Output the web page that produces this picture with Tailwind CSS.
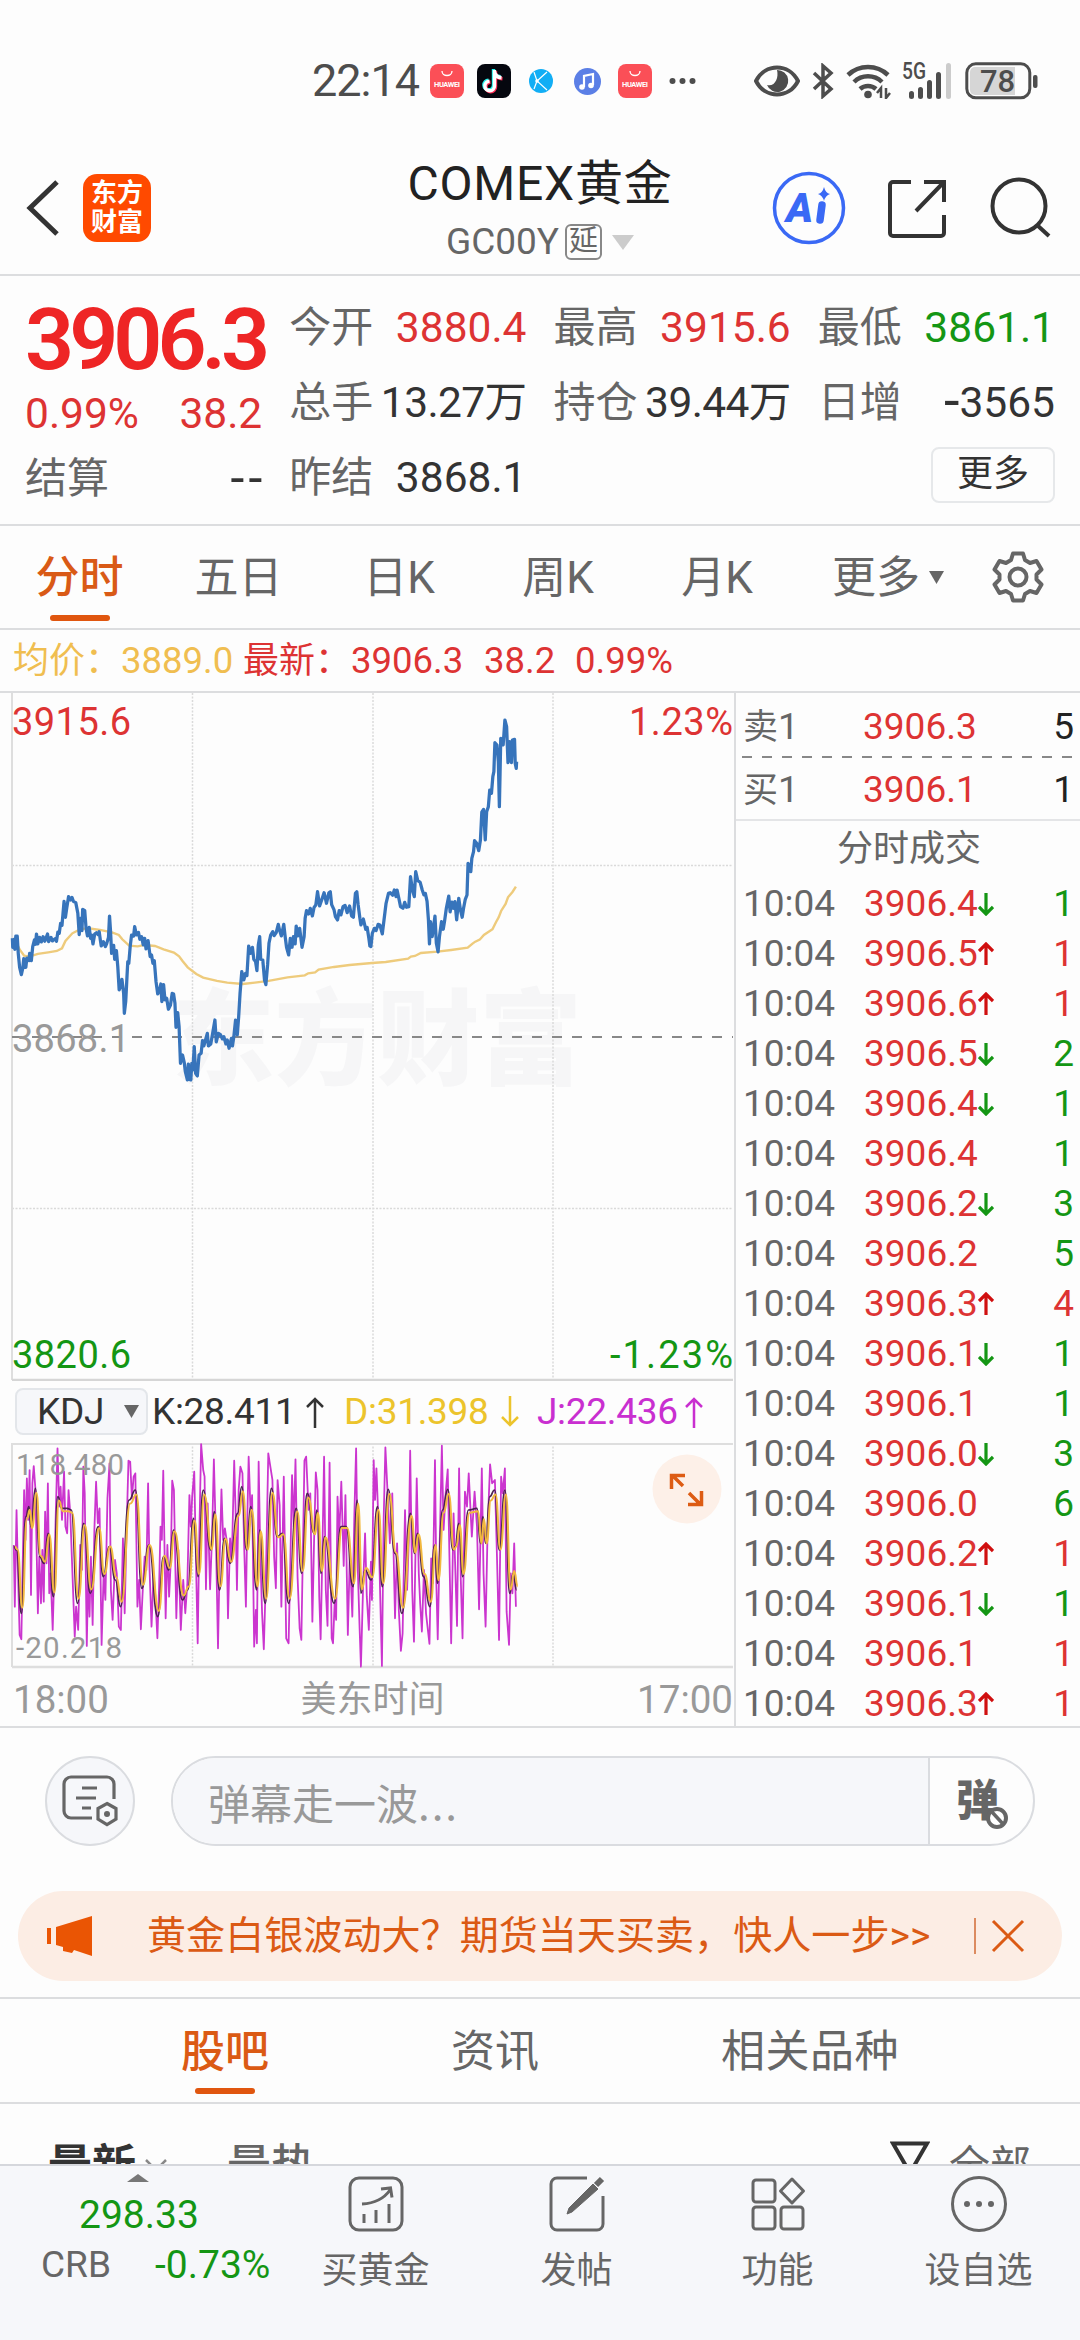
<!DOCTYPE html>
<html lang="zh-CN">
<head>
    <meta charset="UTF-8">
    <meta name="viewport" content="width=device-width, initial-scale=1.0">
    <title>COMEX黄金</title>
    <script src="https://cdn.jsdelivr.net/npm/@tailwindcss/browser@4"></script>
</head>
<body class="w-[1080px] h-[2340px] overflow-hidden flex flex-col bg-[#fdfdfd] text-[#666] font-['Roboto','Noto_Sans_CJK_SC',sans-serif] whitespace-nowrap">

    <!-- 状态栏 -->
    <div class="h-[162px] shrink-0 flex items-center pl-[312px] text-[#4d4d4d]">
        <span class="text-[45px] w-[118px] tracking-[-1px]">22:14</span>
        <svg class="w-[34px] h-[34px] shrink-0" viewBox="0 0 34 34"><rect width="34" height="34" rx="8" fill="#fb4f57"/><path d="M12 7c0 6 10 6 10 0" fill="none" stroke="#fff" stroke-width="1.3"/><text x="17" y="23" font-size="7.5" font-weight="700" fill="#fff" text-anchor="middle" textLength="26">HUAWEI</text></svg>
        <svg class="w-[34px] h-[34px] shrink-0 ml-[13px]" viewBox="0 0 34 34"><rect width="34" height="34" rx="8" fill="#05070f"/><g fill="none" stroke-width="3.4"><path d="M17.5 6v16a4.800 4.800 0 1 1-5-4.800M17.500 8c1 4 3.500 5.500 7 5.800" stroke="#25f4ee" transform="translate(-1 -1)"/><path d="M17.500 6v16a4.800 4.800 0 1 1-5-4.800M17.500 8c1 4 3.500 5.500 7 5.800" stroke="#fe2c55" transform="translate(1 1)"/><path d="M17.500 6v16a4.800 4.800 0 1 1-5-4.800M17.500 8c1 4 3.500 5.500 7 5.800" stroke="#fff"/></g></svg>
        <svg class="w-[24px] h-[24px] shrink-0 ml-[18px]" viewBox="0 0 24 24"><circle cx="12" cy="12" r="12" fill="#12aef5"/><path d="M5 3l3 9 10 9M8 12l10-9M5 20l3-8" fill="none" stroke="#fff" stroke-width="1.2"/><circle cx="8" cy="12" r="1.800" fill="#fff"/></svg>
        <svg class="w-[27px] h-[27px] shrink-0 ml-[21px]" viewBox="0 0 27 27"><circle cx="13.500" cy="13.500" r="13.500" fill="#5b7fe6"/><path d="M10 19V8l9-2v11" fill="none" stroke="#fff" stroke-width="2.200"/><circle cx="8" cy="19" r="2.800" fill="#fff"/><circle cx="17" cy="17.500" r="2.800" fill="#fff"/></svg>
        <svg class="w-[34px] h-[34px] shrink-0 ml-[17px]" viewBox="0 0 34 34"><rect width="34" height="34" rx="8" fill="#fb4f57"/><path d="M12 7c0 6 10 6 10 0" fill="none" stroke="#fff" stroke-width="1.3"/><text x="17" y="23" font-size="7.5" font-weight="700" fill="#fff" text-anchor="middle" textLength="26">HUAWEI</text></svg>
        <svg class="w-[27px] h-[8px] shrink-0 ml-[17px]" viewBox="0 0 27 8" fill="#4d4d4d"><circle cx="3.500" cy="4" r="3"/><circle cx="13.500" cy="4" r="3"/><circle cx="23.500" cy="4" r="3"/></svg>
        <svg class="w-[46px] h-[34px] shrink-0 ml-[58px]" viewBox="0 0 46 34"><path d="M2 17C11-1 35-1 44 17 35 35 11 35 2 17z" fill="none" stroke="#4d4d4d" stroke-width="4"/><path d="M23 6a11 11 0 1 1-10 15c8 2 12-7 10-15z" fill="#4d4d4d"/></svg>
        <svg class="w-[22px] h-[36px] shrink-0 ml-[12px]" viewBox="0 0 22 36"><path d="M2 10l17 16-8 7V3l8 7L2 26" fill="none" stroke="#4d4d4d" stroke-width="3.500"/></svg>
        <svg class="w-[46px] h-[36px] shrink-0 ml-[12px]" viewBox="0 0 46 36" fill="none" stroke="#4d4d4d" stroke-width="4.500"><path d="M2 12a29 29 0 0 1 40 0M8 19a20 20 0 0 1 28 0M14 26a12 12 0 0 1 16 0"/><circle cx="22" cy="31.500" r="3.800" fill="#4d4d4d" stroke="none"/><path d="M35 35V25l-4 5M40 25v10l4-5" stroke-width="2.500"/></svg>
        <svg class="w-[50px] h-[46px] shrink-0 ml-[10px]" viewBox="0 -4 50 46" fill="#4d4d4d"><text x="0" y="17" font-size="23" font-weight="500" textLength="24" lengthAdjust="spacingAndGlyphs">5G</text><rect x="7" y="29" width="5" height="8" rx="2.500"/><rect x="16" y="25" width="5" height="12" rx="2.500"/><rect x="25" y="18" width="5" height="19" rx="2.500"/><rect x="34" y="10" width="5" height="27" rx="2.500"/><rect x="44" y="1" width="5" height="36" rx="2.500" fill="#ccc"/></svg>
        <svg class="w-[74px] h-[38px] shrink-0 ml-[13px]" viewBox="0 0 74 38"><rect x="1.800" y="1.800" width="63" height="34" rx="9" fill="#fdfdfd" stroke="#4d4d4d" stroke-width="3"/><path d="M10 5h40v28H10a5 5 0 0 1-5-5V10a5 5 0 0 1 5-5z" fill="#d6d6d6"/><rect x="68" y="13" width="4.500" height="13" rx="2" fill="#4d4d4d"/><text x="32.500" y="30" font-size="31" font-weight="500" fill="#4d4d4d" text-anchor="middle">78</text></svg>
    </div>

    <!-- 标题栏 -->
    <div class="h-[114px] shrink-0 flex items-start border-b-2 border-[#dcdddf]">
        <svg class="w-[34px] h-[56px] shrink-0 ml-[26px] mt-[18px]" viewBox="0 0 34 56"><path d="M31 2L4 28l27 26" fill="none" stroke="#333" stroke-width="5"/></svg>
        <div class="w-[68px] h-[68px] shrink-0 ml-[23px] mt-[12px] rounded-[14px] bg-[#ff4a00] text-white text-[26px] leading-[29px] font-bold flex flex-col items-center justify-center"><span>东方</span><span>财富</span></div>
        <div class="w-[620px] shrink-0 ml-[79px] flex flex-col items-center">
            <div class="text-[48px] leading-[48px] tracking-[0.8px] text-[#222] mt-[-2px]">COMEX黄金</div>
            <div class="flex items-center h-[36px] mt-[16px]">
                <span class="text-[37px] leading-[36px]">GC00Y</span>
                <span class="w-[37px] h-[36px] ml-[6px] border-2 border-[#888] rounded-[6px] text-[29px] leading-[31px] text-center">延</span>
                <svg class="w-[22px] h-[15px] ml-[10px]" viewBox="0 0 22 15"><path d="M0 0h22L11 15z" fill="#ccc"/></svg>
            </div>
        </div>
        <svg class="w-[74px] h-[74px] shrink-0 ml-[-78px] mt-[9px]" viewBox="0 0 74 74"><circle cx="37" cy="37" r="34.500" fill="none" stroke="#3a69f5" stroke-width="3.500"/><text x="14" y="51" font-size="41" font-weight="900" font-style="italic" fill="#3a69f5">A</text><path d="M50 34l-2 15" stroke="#3a69f5" stroke-width="7.500" stroke-linecap="round"/><path d="M52 16q1.500 6 6 7-4.500 1.500-6 7-1.500-5.500-6-7 4.500-1 6-7z" fill="#3a69f5"/></svg>
        <svg class="w-[60px] h-[60px] shrink-0 ml-[41px] mt-[17px]" viewBox="0 0 60 60"><path d="M24 3H6a3 3 0 0 0-3 3v48a3 3 0 0 0 3 3h48a3 3 0 0 0 3-3V36M37 3h20v20M57 3L29 32" fill="none" stroke="#333" stroke-width="4"/></svg>
        <svg class="w-[62px] h-[62px] shrink-0 ml-[43px] mt-[15px]" viewBox="0 0 62 62"><circle cx="29" cy="29" r="26.500" fill="none" stroke="#333" stroke-width="4"/><path d="M47 48l12 11" stroke="#333" stroke-width="4"/></svg>
    </div>

    <!-- 行情 -->
    <div class="h-[250px] shrink-0 grid grid-cols-4 gap-x-[27px] px-[25px] border-b-2 border-[#dcdddf] text-[42.500px]">
        <div class="text-[#d33]">
            <div class="h-[76px] mt-[25px] flex items-center text-[86px] font-semibold tracking-[-5px] text-[#ee2525]">3906.3</div>
            <div class="h-[74px] flex justify-between items-center"><span>0.99%</span><span>38.2</span></div>
            <div class="h-[54px] flex justify-between items-center"><span class="text-[#666] text-[42px]">结算</span><span class="text-[#333] tracking-[4px] mr-[-4px] text-[50px]">--</span></div>
        </div>
        <div class="pt-[14px]">
            <div class="h-[75px] flex justify-between items-center"><span class="text-[42px]">今开</span><span class="text-[#d33]">3880.4</span></div>
            <div class="h-[75px] flex justify-between items-center"><span class="text-[42px]">总手</span><span class="text-[#333] tracking-[-0.600px]">13.27万</span></div>
            <div class="h-[75px] flex justify-between items-center"><span class="text-[42px]">昨结</span><span class="text-[#333]">3868.1</span></div>
        </div>
        <div class="pt-[14px]">
            <div class="h-[75px] flex justify-between items-center"><span class="text-[42px]">最高</span><span class="text-[#d33]">3915.6</span></div>
            <div class="h-[75px] flex justify-between items-center"><span class="text-[42px]">持仓</span><span class="text-[#333] tracking-[-0.600px]">39.44万</span></div>
        </div>
        <div class="pt-[14px]">
            <div class="h-[75px] flex justify-between items-center"><span class="text-[42px]">最低</span><span class="text-[#149614]">3861.1</span></div>
            <div class="h-[75px] flex justify-between items-center"><span class="text-[42px]">日增</span><span class="text-[#333] flex items-center"><span class="text-[56px] leading-[42px] mt-[-4px]">-</span>3565</span></div>
            <div class="h-[70px] flex justify-end items-center"><span class="w-[124px] h-[56px] border-2 border-[#e6e8ea] rounded-[8px] text-[36px] leading-[50px] text-center text-[#333]">更多</span></div>
        </div>
    </div>

    <!-- 周期 -->
    <div class="h-[104px] shrink-0 flex items-center border-b-2 border-[#dcdddf] text-[44px]">
        <div class="w-[159px] h-full flex flex-col items-center text-[#d95a16] font-medium"><span class="h-[89px] leading-[104px]">分时</span><span class="w-[60px] h-[6px] rounded-full bg-[#e0560f]"></span></div>
        <div class="w-[159px] text-center pt-[2px]">五日</div>
        <div class="w-[162px] text-center pt-[2px]">日K</div>
        <div class="w-[156px] text-center pt-[2px]">周K</div>
        <div class="w-[162px] text-center pt-[2px]">月K</div>
        <div class="ml-[34px] pt-[2px]">更多</div>
        <svg class="w-[15px] h-[13px] ml-[9px]" viewBox="0 0 14 12"><path d="M0 0h14L7 12z" fill="#666"/></svg>
        <svg class="w-[52px] h-[52px] ml-[48px]" viewBox="0 0 52 52" fill="none" stroke="#666" stroke-width="4" stroke-linejoin="round"><path d="M21 2.500h10l2 6.500 5 3 6.500-2 5 8.500-5 5v5l5 5-5 8.500-6.500-2-5 3-2 6.500H21l-2-6.500-5-3-6.500 2-5-8.500 5-5v-5l-5-5 5-8.500 6.500 2 5-3z"/><circle cx="26" cy="26" r="8.500"/></svg>
    </div>
    <div class="h-[63px] shrink-0 flex items-center pt-[2px] pl-[13px] text-[36.500px] text-[#d33] border-b-2 border-[#dcdddf]">
        <span class="w-[230px] text-[#f0be50]"><span class="text-[36px]">均价：</span>3889.0</span>
        <span class="w-[241px]"><span class="text-[36px]">最新：</span>3906.3</span>
        <span class="w-[91px]">38.2</span>
        <span>0.99%</span>
    </div>

    <div class="h-[1035px] shrink-0 flex border-b-2 border-[#dcdddf]">
        <div class="w-[734px] flex flex-col">
            <!-- 分时图 -->
            <svg class="w-[734px] h-[688px] shrink-0" viewBox="0 693 734 688">
                <text x="172" y="1077" font-size="104" font-weight="900" fill="#f6f6f7" textLength="410" lengthAdjust="spacingAndGlyphs">东方财富</text>
                <g stroke="#dadada" stroke-width="1.500" stroke-dasharray="2 1.500">
                    <path d="M192.500 693v687M373 693v687M553 693v687M12 865.500h721M12 1208.500h721"/>
                </g>
                <path d="M12 693v687" stroke="#dedede" stroke-width="2"/>
                <path d="M12 1380h721" stroke="#d6d6d6" stroke-width="2.500"/>
                <path d="M12 1037h721" stroke="#888" stroke-width="2" stroke-dasharray="10 10"/>
                <g font-size="38">
                    <text x="12" y="735" fill="#d33" textLength="119">3915.6</text>
                    <text x="733" y="735" fill="#d33" text-anchor="end" textLength="104">1.23%</text>
                    <text x="12" y="1052" fill="#999" textLength="118">3868.1</text>
                    <text x="12" y="1368" fill="#149614" textLength="119">3820.6</text>
                    <text x="733" y="1368" fill="#149614" text-anchor="end" textLength="123">-1.23%</text>
                </g>
                <g transform="translate(0 680) scale(.3444 .3333)" fill="none">
                    <polyline stroke="#eecb7c" stroke-width="7" points="38,775 48,790 58,810 70,827 85,830 110,822 140,817 165,813 180,805 190,783 210,760 235,747 260,745 290,750 325,757 345,765 355,778 375,797 400,799 420,795 450,798 475,808 505,818 520,829 530,843 545,862 570,882 590,893 630,903 660,908 705,912 740,908 780,903 835,892 885,886 895,880 915,877 925,869 970,861 1015,855 1080,849 1120,846 1185,836 1193,830 1205,828 1222,819 1270,815 1310,810 1358,803 1372,791 1380,785 1393,779 1405,765 1430,748 1440,727 1448,712 1455,693 1468,672 1475,652 1488,636 1498,620"/>
                    <polyline stroke="#3774bb" stroke-width="9.500" stroke-linejoin="round" points="36,775 37,802 41,778 43,808 46,768 50,768 53,820 57,862 62,884 66,865 69,836 71,862 75,862 78,834 84,842 86,820 91,842 95,800 100,780 103,793 106,762 110,792 115,772 120,786 125,770 130,784 138,762 141,785 148,772 152,783 160,776 164,784 168,756 172,760 176,730 180,736 186,664 190,712 194,683 199,650 205,660 209,652 213,664 220,668 226,700 230,764 234,715 238,752 240,688 246,692 250,746 254,768 259,742 263,775 266,765 270,792 275,762 280,758 285,764 288,755 291,778 294,798 300,785 306,800 310,790 315,772 318,708 321,754 324,820 330,796 333,838 338,812 342,860 346,930 351,915 354,898 359,940 361,1000 365,965 368,905 371,845 374,850 378,800 382,765 388,768 391,740 396,765 402,757 406,778 411,770 416,795 420,775 424,807 430,782 436,830 440,825 444,850 448,842 453,905 458,942 463,932 467,912 470,965 475,914 479,960 484,955 489,988 495,975 500,940 504,942 508,970 511,1042 516,998 520,1040 524,1150 530,1125 535,1148 538,1174 544,1200 547,1152 550,1198 554,1200 557,1150 560,1170 564,1100 568,1180 573,1188 578,1125 584,1120 588,1082 592,1098 598,1075 602,1060 605,1098 612,1092 617,1063 624,1020 628,1086 634,1060 640,1064 646,1077 650,1070 656,1092 660,1080 665,1105 672,1075 675,1098 679,1070 684,1020 689,1065 693,1010 697,940 702,875 708,900 713,880 717,887 722,798 728,820 733,802 737,838 742,845 746,872 750,795 754,770 757,838 763,840 768,900 772,914 777,855 781,790 786,765 792,755 796,767 802,758 808,733 812,752 817,768 824,733 828,770 832,802 838,825 843,775 848,802 852,770 857,792 860,738 865,768 870,745 877,802 883,770 886,715 890,692 896,702 901,685 907,708 912,682 917,675 922,635 928,678 934,660 941,638 948,670 955,638 959,635 963,674 970,690 974,710 980,720 985,692 990,705 996,680 1002,676 1008,698 1015,678 1021,708 1026,712 1032,640 1036,635 1040,675 1045,715 1048,735 1055,717 1062,748 1066,742 1071,775 1074,798 1077,800 1081,760 1087,745 1092,752 1098,733 1103,735 1110,762 1115,720 1121,670 1128,640 1133,638 1140,646 1145,630 1150,650 1153,630 1158,655 1163,680 1170,685 1175,667 1180,682 1187,680 1192,590 1198,632 1203,650 1207,575 1213,602 1220,607 1226,630 1231,645 1235,640 1240,664 1244,720 1247,792 1250,725 1255,770 1259,740 1263,708 1267,790 1272,816 1276,770 1282,725 1287,748 1291,722 1296,685 1303,648 1307,696 1312,666 1317,685 1321,665 1326,720 1332,655 1337,690 1342,712 1346,685 1351,658 1356,645 1359,550 1363,560 1367,575 1370,535 1375,515 1378,482 1384,490 1390,512 1395,480 1399,396 1404,388 1409,480 1413,395 1418,380 1422,330 1427,340 1431,290 1434,275 1437,188 1443,195 1447,245 1450,380 1454,175 1461,195 1466,120 1471,140 1475,248 1480,185 1485,248 1488,180 1494,178 1496,250 1499,265 1500,245"/>
                </g>
            </svg>
            <!-- KDJ -->
            <div class="h-[62px] shrink-0 flex items-center pl-[15px] text-[37px] tracking-[-0.300px] text-[#333]">
                <div class="w-[133px] h-[47px] flex items-center pl-[20px] border-2 border-[#e3e6ea] rounded-[8px] bg-[#f6f7fa] mt-[-1px]">KDJ<svg class="w-[15px] h-[13px] ml-[20px]" viewBox="0 0 14 12"><path d="M0 0h14L7 12z" fill="#666"/></svg></div>
                <span class="ml-[4px] w-[143px]">K:28.411</span>
                <svg class="w-[20px] h-[32px] ml-[10px]" viewBox="0 0 20 32"><path d="M10 32V3M2 11l8-8 8 8" fill="none" stroke="#333" stroke-width="2.500"/></svg>
                <span class="ml-[19px] w-[147px] text-[#ecc42c]">D:31.398</span>
                <svg class="w-[20px] h-[32px] ml-[9px]" viewBox="0 0 20 32"><path d="M10 0v29M2 21l8 8 8-8" fill="none" stroke="#ecc42c" stroke-width="2.500"/></svg>
                <span class="ml-[17px] w-[139px] text-[#c92fd0]">J:22.436</span>
                <svg class="w-[20px] h-[32px] ml-[8px]" viewBox="0 0 20 32"><path d="M10 32V3M2 11l8-8 8 8" fill="none" stroke="#c92fd0" stroke-width="2.500"/></svg>
            </div>
            <svg class="w-[734px] h-[226px] shrink-0" viewBox="0 1443 734 226">
                <path d="M192.500 1443v224M373 1443v224M553 1443v224" stroke="#dadada" stroke-width="1.500" stroke-dasharray="2 1.500"/>
                <path d="M12 1667V1444h721" fill="none" stroke="#dedede" stroke-width="2"/>
                <path d="M12 1667h721" stroke="#dedede" stroke-width="2.500"/>
                <g transform="translate(0 1430) scale(.3444 .3333)" fill="none" stroke-linejoin="round">
                    <polyline stroke="#cb35cf" stroke-width="5.200" points="40,345 43,530 48,240 52,420 57,615 62,628 66,400 70,180 74,330 78,145 82,270 86,120 90,495 94,160 98,108 103,180 106,340 110,550 114,380 119,520 123,360 127,515 131,245 135,400 139,160 143,490 147,430 153,600 158,415 162,250 167,55 172,230 176,170 180,270 186,125 190,290 195,310 199,180 204,250 210,420 217,620 221,530 227,600 233,345 238,420 242,110 246,190 252,648 256,430 260,560 264,380 269,585 274,300 279,155 284,280 289,235 295,645 301,430 306,510 312,205 318,100 322,480 327,570 334,390 339,430 345,590 351,600 357,325 362,550 367,320 373,92 378,95 383,205 388,140 393,130 399,530 404,450 409,598 415,470 420,380 425,420 430,160 434,410 440,590 446,430 451,500 457,625 462,470 466,290 470,330 474,122 481,565 486,345 491,500 496,390 500,152 505,180 512,565 518,360 525,600 532,450 538,550 544,460 550,195 554,290 558,200 564,125 569,390 574,640 579,300 584,42 590,120 594,140 598,478 603,220 610,478 616,310 621,88 627,330 633,655 638,380 643,178 648,330 653,295 658,330 662,565 668,325 673,395 680,92 684,240 688,480 693,180 698,110 704,130 709,350 714,530 718,270 722,80 728,260 732,195 738,650 743,540 746,640 751,95 756,380 761,550 766,658 772,440 779,70 785,110 791,150 796,380 801,475 806,150 812,225 817,530 824,140 831,625 838,640 843,400 848,135 853,290 858,88 864,440 870,595 875,630 880,330 884,92 889,80 896,240 901,190 907,575 912,330 917,127 922,180 927,500 931,628 936,370 941,80 946,480 951,588 957,98 963,625 967,640 972,510 976,570 980,200 985,320 991,155 998,408 1003,195 1010,615 1016,365 1023,560 1029,250 1034,55 1039,420 1044,590 1048,710 1054,480 1060,310 1065,500 1071,600 1077,395 1080,510 1085,90 1089,210 1093,115 1099,280 1104,500 1109,708 1114,270 1119,52 1125,180 1132,340 1139,190 1147,565 1153,340 1158,540 1164,663 1169,610 1176,240 1182,480 1187,330 1191,62 1197,480 1202,635 1210,145 1216,430 1220,520 1225,605 1231,420 1237,550 1247,642 1252,385 1257,460 1263,90 1267,460 1271,628 1277,330 1283,47 1288,300 1294,190 1300,118 1305,380 1310,640 1317,250 1321,385 1327,588 1333,115 1338,450 1343,625 1350,185 1356,230 1361,130 1370,320 1378,185 1385,290 1391,538 1399,115 1404,430 1410,590 1416,290 1423,103 1429,160 1437,150 1443,380 1449,630 1455,140 1460,190 1466,115 1471,545 1478,645 1483,430 1488,490 1493,340 1498,530"/>
                    <path id="kLine" stroke="#4a2350" stroke-width="5"/>
                    <path id="dLine" stroke="#f2b83f" stroke-width="6"/>
                </g>
                <g font-size="29.500" fill="#999">
                    <text x="16" y="1475" textLength="108">118.480</text>
                    <text x="16" y="1658" textLength="106">-20.218</text>
                </g>
                <circle cx="687" cy="1489" r="34.500" fill="#fdf0e8"/>
                <path d="M683 1486l-11-11M671.500 1489v-13.500H685M689 1493l11 11M688 1504.500h13.500V1491" fill="none" stroke="#dd5c14" stroke-width="3.500"/>
            </svg>
            <div class="flex-1 flex justify-between items-center pt-[2px] pr-[1px] pl-[13px] text-[38.500px] text-[#999]">
                <span class="w-[130px]">18:00</span><span class="text-[36px] mr-[1px]">美东时间</span><span class="w-[130px] text-right">17:00</span>
            </div>
        </div>

        <!-- 盘口与成交 -->
        <div class="w-[346px] border-l-2 border-[#dcdddf] text-[37px] text-[#666] flex flex-col">
            <div class="h-[63px] shrink-0 flex items-center pl-[7px] pr-[6px] pt-[2px] mt-[1px]"><span class="w-[120px]"><span class="text-[35px]">卖</span>1</span><span class="flex-1 text-[#d33]">3906.3</span><span class="text-[#222]">5</span></div>
            <svg class="w-[346px] h-[2px] shrink-0 mt-[-1px]" viewBox="0 0 346 2"><path d="M6 1h331" stroke="#888" stroke-width="2" stroke-dasharray="10 10"/></svg>
            <div class="h-[61px] shrink-0 flex items-center pl-[7px] pr-[6px] pt-[2px]"><span class="w-[120px]"><span class="text-[35px]">买</span>1</span><span class="flex-1 text-[#d33]">3906.1</span><span class="text-[#222]">1</span></div>
            <div class="h-[60px] shrink-0 border-t-2 border-[#e4e5e7] text-[36px] leading-[57px] text-center pl-[2px]">分时成交</div>
            <div id="trades"></div>
        </div>
    </div>

    <!-- 弹幕 -->
    <div class="h-[163px] shrink-0 flex items-start pt-[28px] pl-[45px]">
        <div class="w-[90px] h-[90px] rounded-full border-2 border-[#dadce0] bg-[#f6f7fa] flex items-center justify-center">
            <svg class="w-[56px] h-[52px]" viewBox="0 0 56 52" fill="none" stroke="#666" stroke-width="3.200"><path d="M30 43H9a7 7 0 0 1-7-7V9a7 7 0 0 1 7-7h36a7 7 0 0 1 7 7v15M20 13h15M14 23h20M20 33h9"/><path d="M45 28.500l9 5v10.500l-9 5.500-9-5.500V33.500z"/><circle cx="45" cy="39" r="3" fill="#666" stroke="none"/></svg>
        </div>
        <div class="ml-[36px] w-[864px] h-[90px] rounded-full border-2 border-[#dadce0] flex overflow-hidden">
            <div class="w-[757px] bg-[#f6f7fa] border-r-2 border-[#dadce0] pl-[35px] text-[42px] leading-[88px] text-[#999]">弹幕走一波<span class="tracking-[2px] font-['Noto_Sans_CJK_SC']">...</span></div>
            <div class="pl-[26px] flex items-center relative">
                <span class="text-[43px] font-black leading-[80px]">弹</span>
                <svg class="absolute left-[55px] top-[48px] w-[24px] h-[24px]" viewBox="0 0 24 24"><circle cx="12" cy="12" r="9" fill="#fff" stroke="#666" stroke-width="4"/><path d="M7 6l11 12" stroke="#666" stroke-width="3.500"/></svg>
            </div>
        </div>
    </div>

    <!-- 广告条 -->
    <div class="h-[90px] shrink-0 mx-[18px] rounded-full bg-[#fcede4] flex items-center text-[#db5a14]">
        <svg class="w-[48px] h-[42px] shrink-0 ml-[29px]" viewBox="0 0 48 42" fill="#ea5504"><path d="M0 13h4v16H0zM9 12L45 1v40L27 35l-2 3-9-2v-4l-7-2z"/></svg>
        <span class="ml-[52px] w-[805px] shrink-0 text-[39.100px]">黄金白银波动大？期货当天买卖，快人一步&gt;&gt;</span>
        <span class="w-[2px] h-[36px] ml-[22px] shrink-0 bg-[#dc8b60]"></span>
        <svg class="w-[34px] h-[34px] shrink-0 ml-[15px]" viewBox="0 0 34 34"><path d="M2 2l30 30M32 2L2 32" stroke="#db5a14" stroke-width="3"/></svg>
    </div>

    <!-- 社区标签 -->
    <div class="h-[107px] shrink-0 mt-[16px] border-y-2 border-[#dcdddf] flex gap-[182px] pl-[181px] text-[44px]">
        <div class="flex flex-col items-center font-medium text-[#db5a14]"><span class="h-[89px] leading-[106px]">股吧</span><span class="w-[60px] h-[6px] rounded-full bg-[#e0560f]"></span></div>
        <div class="leading-[106px]">资讯</div>
        <div class="leading-[106px] tracking-[0.500px]">相关品种</div>
    </div>
    <div class="h-[60px] shrink-0 overflow-hidden flex items-start text-[44px] leading-[60px] pt-[32px] pl-[48px]">
        <span class="font-bold text-[#333]">最新</span>
        <svg class="w-[22px] h-[16px] ml-[9px] mt-[22px]" viewBox="0 0 22 16"><path d="M1 2l10 10L21 2" fill="none" stroke="#888" stroke-width="2.500"/></svg>
        <span class="ml-[60px] font-medium">最热</span>
        <svg class="w-[40px] h-[44px] ml-[575px] mt-[5px]" viewBox="0 0 40 44"><path d="M3 2.500h34L24 25v16h-8V25z" fill="none" stroke="#333" stroke-width="4"/></svg>
        <span class="ml-[19px] text-[41px]">全部</span>
    </div>

    <!-- 底部导航 -->
    <div class="flex-1 flex border-t-2 border-[#d5d7dc] bg-[#f6f7fa]">
        <div class="w-[275px] flex flex-col">
            <svg class="w-[22px] h-[8px] ml-[127px] mt-[8px]" viewBox="0 0 22 8"><path d="M0 8h22L11 0z" fill="#777"/></svg>
            <div class="text-[39px] leading-[48px] mt-[9px] ml-[79px] text-[#149614]">298.33</div>
            <div class="flex text-[37px] leading-[48px] mt-[2px] ml-[41px]"><span class="w-[114px]">CRB</span><span class="text-[#149614] text-[39px]">-0.73%</span></div>
        </div>
        <div class="w-[201px] flex flex-col items-center pt-[10px] text-[36px] leading-[54px] gap-[12px]">
            <svg class="w-[56px] h-[56px]" viewBox="0 0 56 56" fill="none" stroke="#666" stroke-width="3"><rect x="2" y="2" width="52" height="52" rx="9"/><path d="M14 28q19-1 28-14M33 13l9.500-1 1.500 9.500M16 38v9M28 34v13M41 28v19"/></svg>
            <span>买黄金</span>
        </div>
        <div class="w-[201px] flex flex-col items-center pt-[10px] text-[36px] leading-[54px] gap-[12px]">
            <svg class="w-[56px] h-[56px]" viewBox="0 0 56 56" fill="none" stroke="#666" stroke-width="3"><path d="M38 2H8a6 6 0 0 0-6 6v40a6 6 0 0 0 6 6h40a6 6 0 0 0 6-6V20"/><path d="M44 8l5 5-26 23-5 2 2-6z" fill="#666" stroke-width="1"/><path d="M47 9l6-6" stroke-width="6"/></svg>
            <span>发帖</span>
        </div>
        <div class="w-[201px] flex flex-col items-center pt-[10px] text-[36px] leading-[54px] gap-[12px]">
            <svg class="w-[56px] h-[56px]" viewBox="0 0 56 56" fill="none" stroke="#666" stroke-width="3"><rect x="3" y="4" width="22" height="22" rx="3"/><rect x="3" y="31" width="22" height="22" rx="3"/><rect x="31" y="31" width="22" height="22" rx="3"/><path d="M42 3l11.500 12L42 27 30.500 15z" stroke-linejoin="round"/></svg>
            <span>功能</span>
        </div>
        <div class="w-[201px] flex flex-col items-center pt-[10px] text-[36px] leading-[54px] gap-[12px]">
            <svg class="w-[56px] h-[56px]" viewBox="0 0 56 56"><circle cx="28" cy="28" r="26.500" fill="none" stroke="#666" stroke-width="3"/><g fill="#666"><circle cx="16" cy="28" r="3"/><circle cx="28" cy="28" r="3"/><circle cx="40" cy="28" r="3"/></g></svg>
            <span>设自选</span>
        </div>
    </div>

    <script>
        // 价格, 方向(u/d), 手数, 颜色(r/g)
        const trades = [
            ['3906.4', 'd', 1, 'g'], ['3906.5', 'u', 1, 'r'], ['3906.6', 'u', 1, 'r'], ['3906.5', 'd', 2, 'g'],
            ['3906.4', 'd', 1, 'g'], ['3906.4', '', 1, 'g'], ['3906.2', 'd', 3, 'g'], ['3906.2', '', 5, 'g'],
            ['3906.3', 'u', 4, 'r'], ['3906.1', 'd', 1, 'g'], ['3906.1', '', 1, 'g'], ['3906.0', 'd', 3, 'g'],
            ['3906.0', '', 6, 'g'], ['3906.2', 'u', 1, 'r'], ['3906.1', 'd', 1, 'g'], ['3906.1', '', 1, 'r'],
            ['3906.3', 'u', 1, 'r'],
        ];
        const arrows = {
            u: '<svg class="w-[16px] h-[24px]" viewBox="0 0 16 24"><path d="M8 23V3M1 9l7-7 7 7" fill="none" stroke="#d00f0f" stroke-width="3.200"/></svg>',
            d: '<svg class="w-[16px] h-[24px]" viewBox="0 0 16 24"><path d="M8 1v20M1 15l7 7 7-7" fill="none" stroke="#149614" stroke-width="3.200"/></svg>',
            '': '',
        };
        document.getElementById('trades').innerHTML = trades.map(([price, dir, qty, color]) => `
            <div class="h-[50px] flex items-center pl-[7px] pr-[6px]">
                <span class="w-[121px]">10:04</span>
                <span class="w-[114px] text-[#d33]">${price}</span>
                <span class="flex-1">${arrows[dir]}</span>
                <span class="${color === 'r' ? 'text-[#d33]' : 'text-[#149614]'}">${qty}</span>
            </div>`).join('');

        // K 线的高低点, D 线是它的平滑
        const k = '40,350 48,360 62,550 75,260 84,230 90,290 103,175 115,380 128,400 140,310 155,500 168,200 180,235 195,235 207,240 225,520 243,280 262,490 285,290 300,440 317,350 335,450 350,530 375,210 393,180 412,475 432,345 458,560 475,380 490,420 504,300 530,510 545,480 562,265 575,440 590,180 612,360 622,245 637,480 652,325 668,400 690,250 702,170 716,360 728,230 745,480 754,300 770,520 788,175 805,320 820,310 838,520 860,235 876,430 892,190 912,310 920,240 932,430 942,320 970,520 990,290 1005,290 1025,470 1037,210 1048,490 1060,420 1078,450 1096,230 1110,470 1127,178 1147,370 1167,550 1192,250 1203,370 1212,310 1230,440 1248,530 1262,345 1270,460 1285,240 1300,178 1315,360 1322,350 1332,280 1343,440 1360,240 1385,235 1395,340 1402,260 1410,340 1422,200 1436,180 1450,360 1466,180 1480,490 1490,430 1500,480'
            .split(' ').map(p => p.split(',').map(Number));
        const curve = pts => pts.map(([x, y], i) => {
            if (!i) return `M${x} ${y}`;
            const [px, py] = pts[i - 1];
            const mx = (px + x) / 2;
            return `C${mx} ${py} ${mx} ${y} ${x} ${y}`;
        }).join('');
        document.getElementById('kLine').setAttribute('d', curve(k));
        document.getElementById('dLine').setAttribute('d', curve(k.map(([x, y]) => [x + 3, 345 + (y - 345) * 0.92])));
    </script>
</body>
</html>
